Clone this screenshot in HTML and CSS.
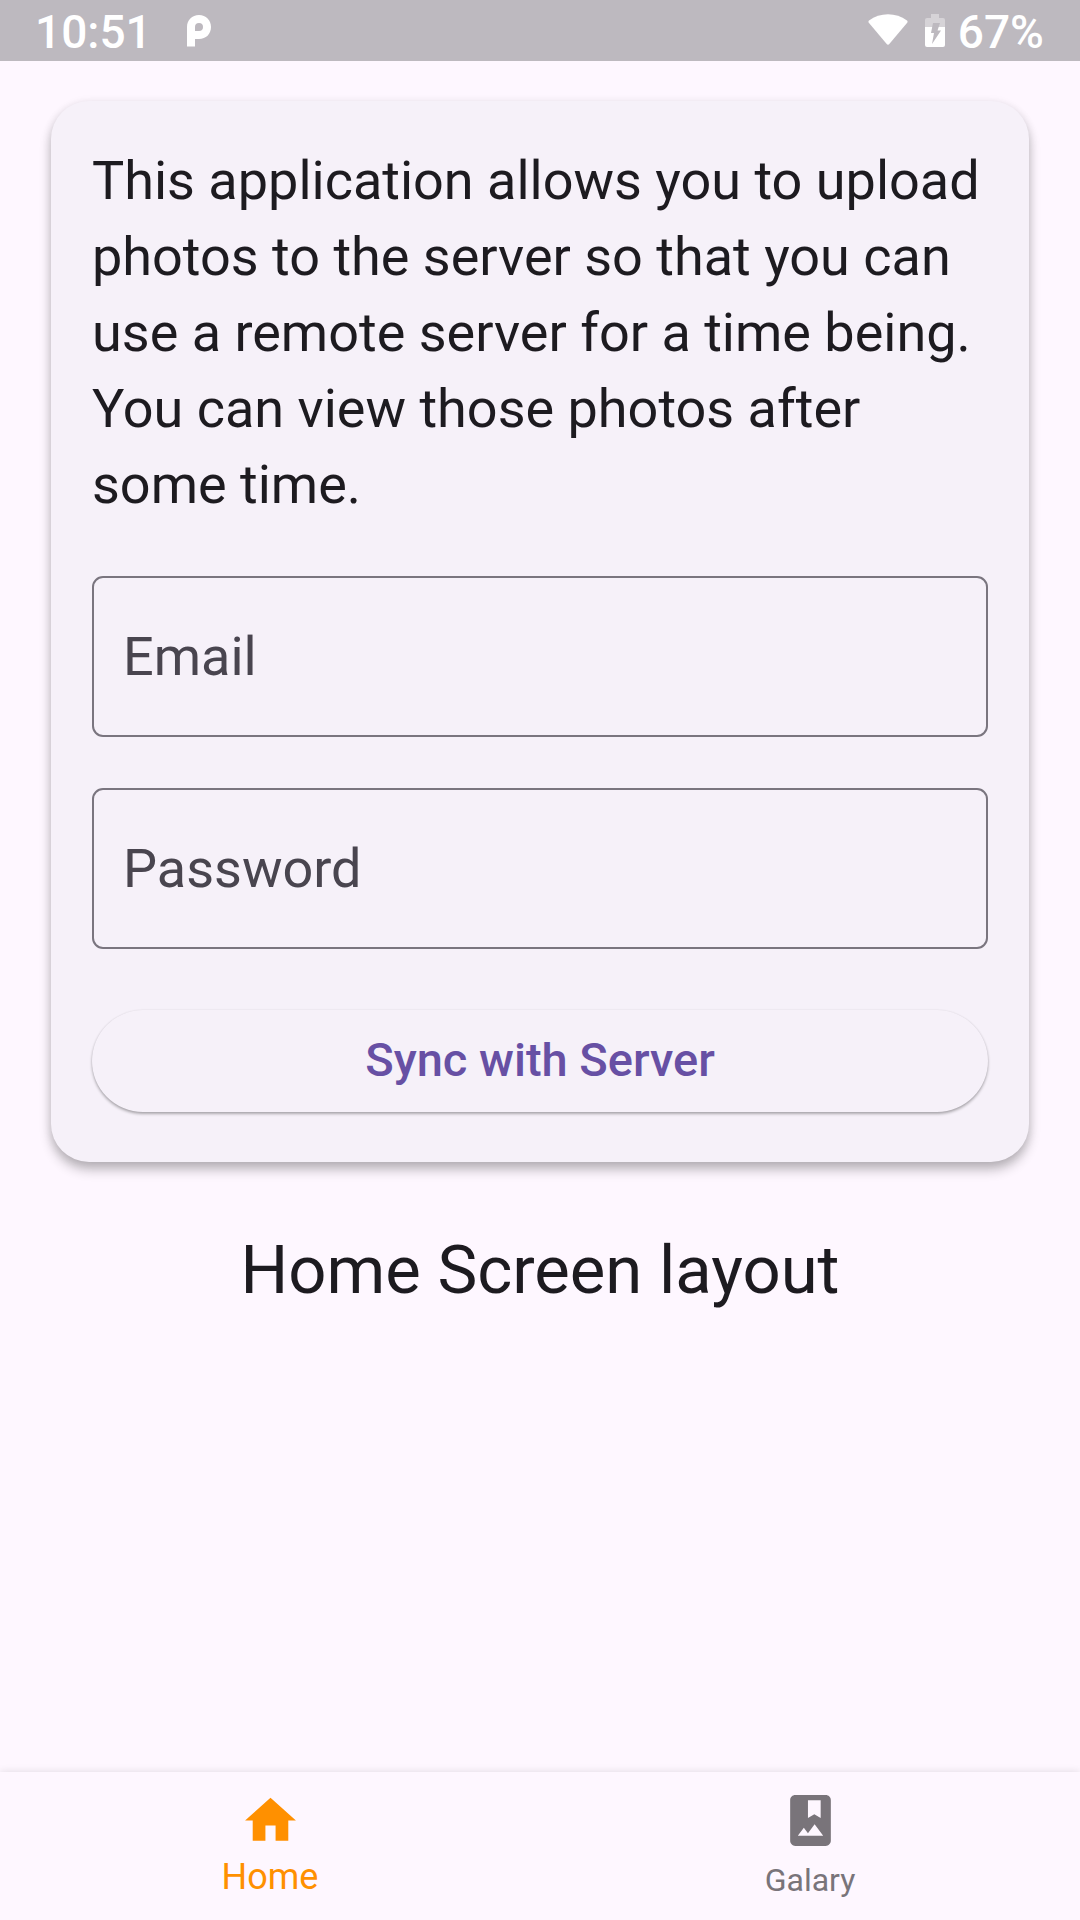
FILE: index.html
```html
<!DOCTYPE html>
<html lang="en">
<head>
  <meta charset="utf-8">
  <meta name="viewport" content="width=device-width, initial-scale=1">
  <title>Home</title>
  <link rel="stylesheet" href="styles.css">
</head>
<body>
  <header class="status">
    <div class="status-left">
      <span>10:51</span>
      <svg class="parking" viewBox="0 0 24 32" aria-hidden="true"><path fill="#fff" fill-rule="evenodd" d="M0 12C0 5 5 0 12 0s12 5 12 12-5 12-12 12H8v7.500H0zM12 8a4 4 0 0 0-4 4v4h4a4 4 0 0 0 0-8z"/></svg>
    </div>
    <div class="status-right">
      <svg class="wifi" viewBox="0 0 40 31" aria-hidden="true"><path fill="#fff" d="M1 6.500C12-2 28-2 39 6.500q1 1 .2 2.200L21.500 29.800q-1.500 1.700-3 0L.8 8.700Q0 7.500 1 6.500z"/></svg>
      <svg class="battery" viewBox="0 0 20 34" aria-hidden="true"><path fill="#d6d3d7" d="M6 0h8v4h4q2 0 2 2v8H0V6q0-2 2-2h4z"/><path fill="#fff" d="M0 13h20v18q0 2-2 2H2q-2 0-2-2z"/><path fill="#bdb9bf" d="M8 9h7l-2.500 7.500H16L7 30l2-11H6z"/></svg>
      <span>67%</span>
    </div>
  </header>

  <main class="content">
    <form class="card">
      <p class="intro">This application allows you to upload photos to the server so that you can use a remote server for a time being. You can view those photos after <br>some time.</p>
      <div class="field">
        <input id="email" type="email">
        <label for="email">Email</label>
      </div>
      <div class="field">
        <input id="password" type="password">
        <label for="password">Password</label>
      </div>
      <button class="sync" type="button">Sync with Server</button>
    </form>
    <h1 class="title">Home Screen layout</h1>
  </main>

  <nav class="tabs">
    <a class="tab active" href="#home">
      <svg viewBox="0 0 24 24" aria-hidden="true"><path fill="currentColor" d="M10 20v-6h4v6h5v-8h3L12 3 2 12h3v8z"/></svg>
      <span>Home</span>
    </a>
    <a class="tab" href="#galary">
      <svg viewBox="0 0 24 24" aria-hidden="true"><path fill="currentColor" fill-rule="evenodd" d="M18 2H6c-1.100 0-2 .9-2 2v16c0 1.100.9 2 2 2h12c1.100 0 2-.9 2-2V4c0-1.100-.9-2-2-2zm-7 2h5v7l-2.500-1.500L11 11zM7 18l2.380-3.170L11 17l2.620-3.500L17 18z"/></svg>
      <span>Galary</span>
    </a>
  </nav>
</body>
</html>
```
FILE: styles.css
```css
* {
  box-sizing: border-box;
}

body {
  display: flex;
  flex-direction: column;
  min-height: 100vh;
  margin: 0;
  background: #fef7ff;
  color: #1d1b20;
  font-family: Roboto, sans-serif;
}

.status {
  display: flex;
  justify-content: space-between;
  height: 61px;
  padding: 0 36px 0 35px;
  background: #bdb9bf;
  color: #fff;
  font-size: 46px;
  font-weight: 500;
  line-height: 65px;
}

.status-left,
.status-right {
  display: flex;
  align-items: flex-start;
}

.status-left {
  gap: 35px;
}

.status-right {
  gap: 13px;
}

.status svg {
  display: block;
  flex: none;
}

.parking {
  width: 24px;
  height: 32px;
  margin-top: 15px;
}

.wifi {
  width: 40px;
  height: 31px;
  margin: 14px 4px 0 0;
}

.battery {
  width: 20px;
  height: 34px;
  margin-top: 14px;
}

.content {
  flex: 1;
  padding: 40px 51px;
}

.card {
  display: flex;
  flex-direction: column;
  gap: 51px;
  padding: 42px 41px 50px;
  border-radius: 38px;
  background: #f6f1f9;
  box-shadow: 0 8px 12px rgba(0, 0, 0, 0.24), 0 2px 10px rgba(0, 0, 0, 0.1);
}

.intro {
  margin: 0;
  padding-bottom: 2px;
  font-size: 54px;
  line-height: 76px;
}

.field {
  display: grid;
}

.field input,
.field label {
  grid-area: 1 / 1;
  font: inherit;
  font-size: 54px;
}

.field input {
  width: 100%;
  height: 161px;
  padding: 0 30px;
  border: 2px solid #7a757f;
  border-radius: 11px;
  background: transparent;
}

.field label {
  align-self: center;
  padding-left: 31px;
  color: #49454f;
  pointer-events: none;
}

.sync {
  height: 102px;
  margin-top: 10px;
  padding: 0 0 4px;
  border: 0;
  border-radius: 51px;
  background: #f6f1f9;
  box-shadow: 0 2px 3px rgba(0, 0, 0, 0.3), 0 0 2px rgba(0, 0, 0, 0.08);
  color: #6750a4;
  font: inherit;
  font-size: 47px;
  font-weight: 500;
}

.title {
  margin: 68px 0 0;
  font-size: 67px;
  font-weight: 400;
  line-height: 80px;
  text-align: center;
}

.tabs {
  display: flex;
  height: 148px;
  background: #fef7ff;
  box-shadow: 0 0 8px rgba(0, 0, 0, 0.12);
}

.tab {
  display: flex;
  flex: 1;
  flex-direction: column;
  align-items: center;
  padding-top: 18px;
  color: #79747a;
  font-size: 32px;
  line-height: 58px;
  text-decoration: none;
}

.tab.active {
  color: #ff9000;
  font-size: 36px;
  line-height: 52px;
}

.tab svg {
  width: 61px;
  height: 61px;
}
```
